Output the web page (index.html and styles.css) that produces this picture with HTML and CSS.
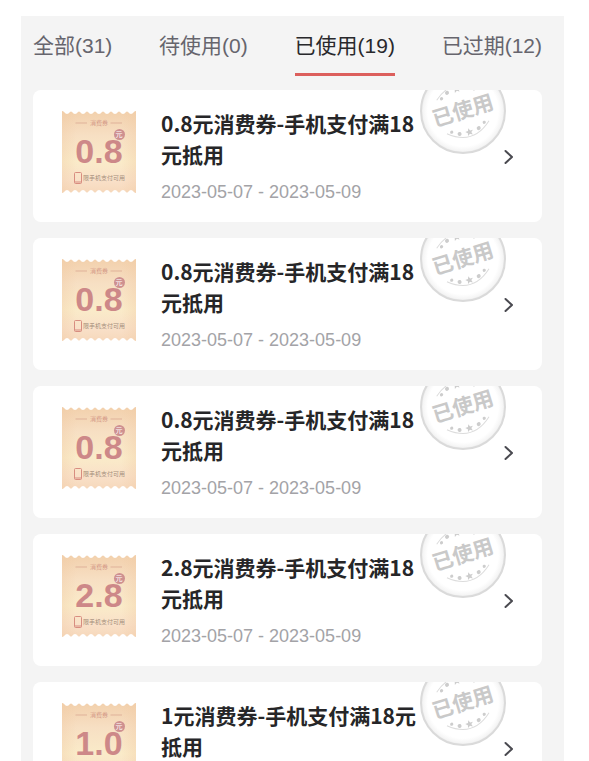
FILE: index.html
```html
<!DOCTYPE html>
<html lang="zh-CN">
<head>
<meta charset="utf-8">
<meta name="viewport" content="width=device-width, initial-scale=1">
<title>消费券</title>
<link rel="stylesheet" href="styles.css">
</head>
<body>
<svg class="defs" aria-hidden="true">
  <defs>
    <linearGradient id="paper" x1="0" y1="0" x2="0" y2="1">
      <stop offset="0" stop-color="#f2d0ac"/>
      <stop offset="0.3" stop-color="#f7dfc3"/>
      <stop offset="0.62" stop-color="#faebc9"/>
      <stop offset="0.85" stop-color="#f9e0c8"/>
      <stop offset="1" stop-color="#f6d8bb"/>
    </linearGradient>
    <linearGradient id="edge" x1="0" y1="0" x2="1" y2="0">
      <stop offset="0" stop-color="#f0c79f" stop-opacity="0.3"/>
      <stop offset="0.2" stop-color="#f0c79f" stop-opacity="0"/>
      <stop offset="0.8" stop-color="#f0c79f" stop-opacity="0"/>
      <stop offset="1" stop-color="#f0c79f" stop-opacity="0.3"/>
    </linearGradient>
    <radialGradient id="disc">
      <stop offset="0.84" stop-color="#fff"/>
      <stop offset="0.95" stop-color="#f5f5f5"/>
      <stop offset="1" stop-color="#e8e8e8"/>
    </radialGradient>
    <path id="star" d="M0-4 1.1-1.3 4-1.2 1.8.6 2.5 3.4 0 1.8-2.5 3.4-1.8.6-4-1.2-1.1-1.3Z"/>
    <path id="ticket-shape" d="M0 0q1 0 2 1 3 4 6 0 1-1 2 0 3 4 6 0 1-1 2 0 3 4 6 0 1-1 2 0 3 4 6 0 1-1 2 0 3 4 6 0 1-1 2 0 3 4 6 0 1-1 2 0 3 4 6 0 1-1 2 0 3 4 6 0 1-1 2 0 3 4 6 0 1-1 2-1V82q-1 0-2-1-3-4-6 0-1 1-2 0-3-4-6 0-1 1-2 0-3-4-6 0-1 1-2 0-3-4-6 0-1 1-2 0-3-4-6 0-1 1-2 0-3-4-6 0-1 1-2 0-3-4-6 0-1 1-2 0-3-4-6 0-1 1-2 0-3-4-6 0-1 1-2 1Z"/>
    <g id="ticket-base">
      <use href="#ticket-shape" fill="url(#paper)"/>
      <use href="#ticket-shape" fill="url(#edge)"/>
      <path d="M13.500 12H25M48.500 12H60" stroke="#dfb199"/>
      <circle cx="57.500" cy="23.500" r="5.500" fill="#ce9090"/>
      <rect x="12.500" y="61.500" width="7" height="11" rx="1" fill="none" stroke="#d88d80"/>
      <path d="M12.500 71h7" stroke="#d88d80"/>
    </g>
    <g id="stamp-base">
      <circle cx="43" cy="43" r="42" fill="url(#disc)" stroke="#dadada" stroke-width="2"/>
      <g transform="rotate(-17 43 43)" fill="#cdcdcd">
        <path d="M21 60Q43 79 65 60M21 25Q43 7 65 25" fill="none" stroke="#dcdcdc"/>
        <use href="#star" x="43" y="65"/>
        <circle cx="33" cy="64" r="2"/><circle cx="53" cy="64" r="2"/>
        <circle cx="26" cy="60" r="1.600"/><circle cx="60" cy="60" r="1.600"/>
        <use href="#star" x="43" y="20"/>
        <circle cx="33" cy="21" r="2"/><circle cx="53" cy="21" r="2"/>
        <circle cx="26" cy="25" r="1.600"/><circle cx="60" cy="25" r="1.600"/>
      </g>
    </g>
  </defs>
</svg>
<main class="panel">
  <nav class="tabs" aria-label="消费券状态">
    <a class="tab" href="#all">全部(31)</a>
    <a class="tab" href="#unused">待使用(0)</a>
    <a class="tab tab-active" href="#used" aria-current="page">已使用(19)</a>
    <a class="tab" href="#expired">已过期(12)</a>
  </nav>
  <ul class="coupons">
    <li><a class="coupon" href="#coupon-1">
      <svg class="ticket" viewBox="0 0 74 82"><use href="#ticket-base"/><text class="t-head" x="37" y="14">消费券</text><text class="t-value" x="37" y="52">0.8</text><text class="t-unit" x="57" y="26">元</text><text class="t-note" x="21" y="69">限手机支付可用</text></svg>
      <div class="info"><h2 class="title">0.8元消费券-手机支付满18元抵用</h2><p class="date">2023-05-07 - 2023-05-09</p></div>
      <svg class="chevron" viewBox="0 0 10 16"><path d="M1.500 2 8 8l-6.500 6"/></svg>
      <svg class="stamp" viewBox="0 0 86 86"><use href="#stamp-base"/><text class="s-text" x="43" y="50" transform="rotate(-17 43 43)">已使用</text></svg>
    </a></li>
    <li><a class="coupon" href="#coupon-2">
      <svg class="ticket" viewBox="0 0 74 82"><use href="#ticket-base"/><text class="t-head" x="37" y="14">消费券</text><text class="t-value" x="37" y="52">0.8</text><text class="t-unit" x="57" y="26">元</text><text class="t-note" x="21" y="69">限手机支付可用</text></svg>
      <div class="info"><h2 class="title">0.8元消费券-手机支付满18元抵用</h2><p class="date">2023-05-07 - 2023-05-09</p></div>
      <svg class="chevron" viewBox="0 0 10 16"><path d="M1.500 2 8 8l-6.500 6"/></svg>
      <svg class="stamp" viewBox="0 0 86 86"><use href="#stamp-base"/><text class="s-text" x="43" y="50" transform="rotate(-17 43 43)">已使用</text></svg>
    </a></li>
    <li><a class="coupon" href="#coupon-3">
      <svg class="ticket" viewBox="0 0 74 82"><use href="#ticket-base"/><text class="t-head" x="37" y="14">消费券</text><text class="t-value" x="37" y="52">0.8</text><text class="t-unit" x="57" y="26">元</text><text class="t-note" x="21" y="69">限手机支付可用</text></svg>
      <div class="info"><h2 class="title">0.8元消费券-手机支付满18元抵用</h2><p class="date">2023-05-07 - 2023-05-09</p></div>
      <svg class="chevron" viewBox="0 0 10 16"><path d="M1.500 2 8 8l-6.500 6"/></svg>
      <svg class="stamp" viewBox="0 0 86 86"><use href="#stamp-base"/><text class="s-text" x="43" y="50" transform="rotate(-17 43 43)">已使用</text></svg>
    </a></li>
    <li><a class="coupon" href="#coupon-4">
      <svg class="ticket" viewBox="0 0 74 82"><use href="#ticket-base"/><text class="t-head" x="37" y="14">消费券</text><text class="t-value" x="37" y="52">2.8</text><text class="t-unit" x="57" y="26">元</text><text class="t-note" x="21" y="69">限手机支付可用</text></svg>
      <div class="info"><h2 class="title">2.8元消费券-手机支付满18元抵用</h2><p class="date">2023-05-07 - 2023-05-09</p></div>
      <svg class="chevron" viewBox="0 0 10 16"><path d="M1.500 2 8 8l-6.500 6"/></svg>
      <svg class="stamp" viewBox="0 0 86 86"><use href="#stamp-base"/><text class="s-text" x="43" y="50" transform="rotate(-17 43 43)">已使用</text></svg>
    </a></li>
    <li><a class="coupon" href="#coupon-5">
      <svg class="ticket" viewBox="0 0 74 82"><use href="#ticket-base"/><text class="t-head" x="37" y="14">消费券</text><text class="t-value" x="37" y="52">1.0</text><text class="t-unit" x="57" y="26">元</text><text class="t-note" x="21" y="69">限手机支付可用</text></svg>
      <div class="info"><h2 class="title">1元消费券-手机支付满18元抵用</h2><p class="date">2023-05-07 - 2023-05-09</p></div>
      <svg class="chevron" viewBox="0 0 10 16"><path d="M1.500 2 8 8l-6.500 6"/></svg>
      <svg class="stamp" viewBox="0 0 86 86"><use href="#stamp-base"/><text class="s-text" x="43" y="50" transform="rotate(-17 43 43)">已使用</text></svg>
    </a></li>
  </ul>
</main>
</body>
</html>
```
FILE: styles.css
```css
* {
  box-sizing: border-box;
}

body {
  margin: 0;
  padding: 16px 25px 0 21px;
  height: 100vh;
  overflow: hidden;
  background: #fff;
  font-family: "Liberation Sans", "Noto Sans CJK SC", sans-serif;
}

.defs {
  position: absolute;
  width: 0;
  height: 0;
}

.panel {
  display: flex;
  flex-direction: column;
  height: 100%;
  background: #f4f4f4;
}

.tabs {
  display: flex;
  justify-content: space-between;
  padding: 13px 22px 14px 12px;
}

.tab {
  padding-bottom: 11px;
  border-bottom: 3px solid transparent;
  color: #66656d;
  font-size: 21px;
  line-height: 33px;
  text-decoration: none;
  white-space: nowrap;
}

.tab-active {
  border-color: #dc5f5c;
  color: #29292c;
}

.coupons {
  display: flex;
  flex: 1;
  flex-direction: column;
  gap: 16px;
  min-height: 0;
  margin: 0;
  padding: 0 22px 16px 12px;
  overflow-y: auto;
  scrollbar-width: none;
  list-style: none;
}

.coupon {
  position: relative;
  display: flex;
  align-items: center;
  padding: 18px 28px 16px 29px;
  border-radius: 8px;
  overflow: hidden;
  background: #fff;
  color: #262628;
  text-decoration: none;
}

.ticket {
  flex: none;
  width: 74px;
  height: 82px;
  margin-top: -10px;
}

.info {
  flex: 1;
  margin: 0 84px 0 25px;
}

.title {
  margin: 0;
  font-family: "Noto Sans CJK SC", sans-serif;
  font-size: 21px;
  font-weight: 700;
  line-height: 31px;
  word-break: break-all;
}

.date {
  margin: 8px 0 0;
  color: #a3a3a7;
  font-size: 18px;
  line-height: 28px;
}

.chevron {
  flex: none;
  width: 10px;
  height: 16px;
  fill: none;
  stroke: #4a4a50;
  stroke-width: 2;
  stroke-linecap: round;
  stroke-linejoin: round;
}

.stamp {
  position: absolute;
  top: -22px;
  right: 36px;
  width: 86px;
  height: 86px;
}

.t-head,
.t-value,
.t-unit {
  text-anchor: middle;
}

.t-head {
  fill: #d49a88;
  font-size: 6px;
}

.t-value {
  fill: #cd8888;
  font-size: 34px;
  font-weight: 700;
}

.t-unit {
  fill: #fff;
  font-size: 7px;
}

.t-note {
  fill: #a58f7c;
  font-size: 6px;
}

.s-text {
  fill: #c9c9c9;
  font-family: "Liberation Serif", "Noto Sans CJK SC", serif;
  font-size: 21px;
  font-weight: 700;
  text-anchor: middle;
}
```
